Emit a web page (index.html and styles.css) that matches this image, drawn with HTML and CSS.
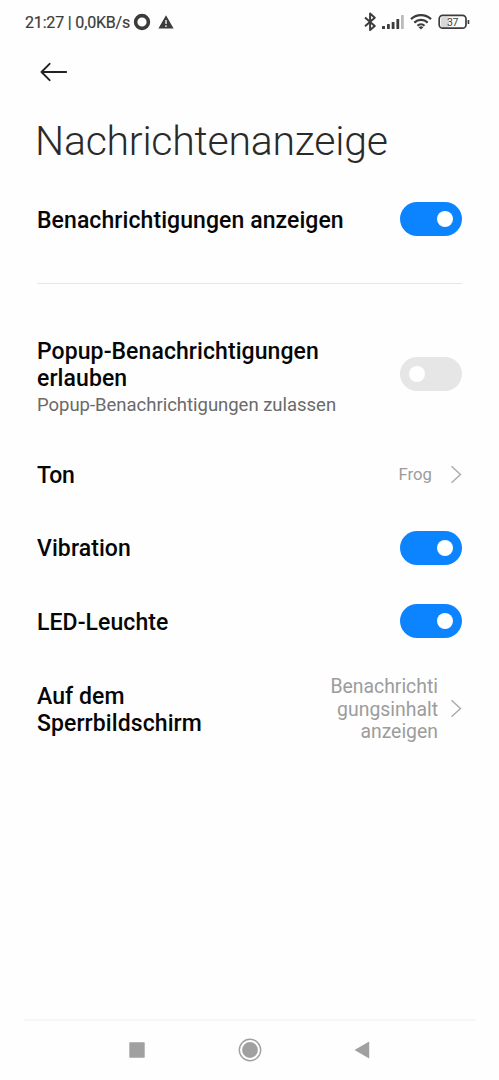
FILE: index.html
```html
<!DOCTYPE html>
<html lang="de">
<head>
<meta charset="utf-8">
<title>Nachrichtenanzeige</title>
<link rel="stylesheet" href="styles.css">
</head>
<body>
<div class="screen">
  <div class="status">
    <span class="clock">21:27 | 0,0KB/s</span>
    <svg class="ring" width="18" height="18" viewBox="0 0 18 18"><circle cx="9" cy="9" r="6.4" fill="none" stroke="#3c3c3c" stroke-width="3.6"/></svg>
    <svg class="warn" width="16" height="14" viewBox="0 0 16 14"><path d="M8 .3 15.6 13.6H.4Z" fill="#3c3c3c"/><path d="M8 5v4M8 10.2v1.8" stroke="#fff" stroke-width="1.3"/></svg>
    <svg class="system" width="108" height="20" viewBox="0 0 108 20">
      <path d="m2 5.6 9.8 8.4-4.7 4.1V1.6l4.7 4.1L2 14.2" fill="none" stroke="#3c3c3c" stroke-width="2" stroke-linejoin="round"/>
      <g fill="#3c3c3c"><rect x="19" y="14" width="3" height="3" rx=".6"/><rect x="24" y="12" width="2.8" height="5" rx=".6"/><rect x="28.7" y="10" width="2.8" height="7" rx=".6"/><rect x="33.4" y="7" width="2.8" height="10" rx=".6"/></g>
      <rect x="38" y="3" width="2.8" height="14" rx=".6" fill="#bbb"/>
      <g fill="none" stroke="#3c3c3c" stroke-width="2.2"><path d="M48 7.1a14.5 14.5 0 0 1 20 0M51.3 10.6a9.7 9.7 0 0 1 13.4 0M54.5 13.8a5 5 0 0 1 7 0"/></g>
      <path d="M55.6 15.3a3.5 3.5 0 0 1 4.8 0L58 17.6Z" fill="#3c3c3c"/>
      <rect x="78" y="5" width="8" height="10.5" rx="2" fill="#d8d8d8"/>
      <rect x="76.2" y="3.4" width="26.8" height="12.8" rx="3.5" fill="none" stroke="#3c3c3c" stroke-width="1.7"/>
      <rect x="104.6" y="8" width="1.7" height="4" rx=".6" fill="#3c3c3c"/>
      <text class="battery" x="89.7" y="13.8" text-anchor="middle" textLength="11.5">37</text>
    </svg>
  </div>
  <div class="back"><svg width="28" height="20" viewBox="0 0 28 20"><path d="M26.2 10H1.5M9.6 1.8 1.5 10l8.1 8.2" fill="none" stroke="#222" stroke-width="1.9" stroke-linecap="round" stroke-linejoin="round"/></svg></div>
  <h1 class="heading">Nachrichtenanzeige</h1>
  <div class="row first"><span class="title">Benachrichtigungen anzeigen</span><span class="switch on"></span></div>
  <div class="divider"></div>
  <div class="row popup">
    <div class="copy"><div class="title">Popup-Benachrichtigungen<br>erlauben</div><div class="sub">Popup-Benachrichtigungen zulassen</div></div>
    <span class="switch"></span>
  </div>
  <div class="row tone"><span class="title">Ton</span><div class="link"><span class="value small">Frog</span><svg width="12" height="19" viewBox="0 0 12 19"><path d="m1.5 1.2 9 8.3-9 8.3" fill="none" stroke="#aaa" stroke-width="1.4"/></svg></div></div>
  <div class="row vibration"><span class="title">Vibration</span><span class="switch on"></span></div>
  <div class="row led"><span class="title">LED-Leuchte</span><span class="switch on"></span></div>
  <div class="row lock"><span class="title">Auf dem<br>Sperrbildschirm</span><div class="link"><span class="value">Benachrichti<br>gungsinhalt<br>anzeigen</span><svg width="12" height="19" viewBox="0 0 12 19"><path d="m1.5 1.2 9 8.3-9 8.3" fill="none" stroke="#aaa" stroke-width="1.4"/></svg></div></div>
  <div class="nav">
    <svg width="16" height="16" viewBox="0 0 16 16"><rect x=".3" y=".3" width="15.4" height="15.4" rx=".6" fill="#a0a0a0"/></svg>
    <svg width="24" height="24" viewBox="0 0 24 24"><circle cx="12" cy="12" r="10.7" fill="none" stroke="#a0a0a0" stroke-width="1.4"/><circle cx="12" cy="12" r="7.9" fill="#a0a0a0"/></svg>
    <svg width="16" height="18" viewBox="0 0 16 18"><path d="M15.2.5v17L.5 9Z" fill="#a0a0a0"/></svg>
  </div>
</div>
</body>
</html>
```
FILE: styles.css
```css
* { box-sizing: border-box; }
body { margin: 0; background: #fefefe; font-family: Roboto, "Liberation Sans", sans-serif; }
svg { display: block; flex: none; }
.screen { width: 499px; height: 1080px; display: flex; flex-direction: column; }
.status { height: 44px; padding: 0 28px 0 25px; display: flex; align-items: center; color: #3c3c3c; }
.clock { font-size: 16px; line-height: 20px; letter-spacing: -0.17px; padding-top: 1px; white-space: nowrap; width: 105px; -webkit-text-stroke: 0.2px #3c3c3c; }
.ring { margin-left: 3px; }
.warn { margin-left: 7px; }
.system { margin-left: auto; }
.battery { font-size: 10.5px; fill: #3c3c3c; }
.back { height: 56px; padding: 18px 0 0 40px; }
.heading { margin: 0; height: 84px; padding: 17px 0 0 35px; font-size: 41px; line-height: 48px; letter-spacing: -0.24px; font-weight: 300; color: #2a2a2a; white-space: nowrap; }
.row { height: 73px; padding: 0 37px; display: flex; align-items: center; justify-content: space-between; }
.first { height: 70px; }
.divider { height: 1px; margin: 29px 37px 26px; background: #e6e6e6; }
.popup { height: 128px; }
.copy { padding-top: 4px; }
.led { height: 74px; }
.title { padding-top: 2px; font-size: 23px; line-height: 27px; letter-spacing: 0.08px; font-weight: 500; color: #060606; white-space: nowrap; }
.tone .title { padding-top: 1px; letter-spacing: -0.3px; }
.lock { height: 102px; }
.lock .value { padding-top: 2px; }
.sub { font-size: 18.5px; line-height: 24px; margin-top: 1px; letter-spacing: -0.02px; color: #6a6a6a; white-space: nowrap; }
.switch { width: 62px; height: 34px; padding: 0 9px; border-radius: 17px; background: #e6e6e6; display: flex; align-items: center; }
.switch::before { content: ""; width: 16px; height: 16px; border-radius: 50%; background: #fff; }
.on { background: #0d84ff; justify-content: flex-end; }
.link { display: flex; align-items: center; gap: 12px; }
.value { font-size: 19.4px; line-height: 22.7px; color: #9c9c9c; text-align: right; }
.small { font-size: 16.7px; padding-top: 1px; margin-right: 6px; }
.nav { height: 61px; margin: auto 23px 0 24px; padding: 0 106px 2px 105px; border-top: 2px solid #f6f6f6; display: flex; align-items: center; justify-content: space-between; }
```
